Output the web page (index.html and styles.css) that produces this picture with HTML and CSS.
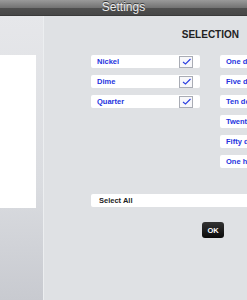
FILE: index.html
```html
<!DOCTYPE html>
<html lang="en">
<head>
    <meta charset="UTF-8">
    <meta name="viewport" content="width=device-width, initial-scale=1.0">
    <title>Settings</title>
    <link rel="stylesheet" href="styles.css">
</head>
<body>

<header class="titlebar">Settings</header>

<div class="main">
    <aside class="sidebar">
        <div class="side-card"></div>
    </aside>

    <section class="content">
        <h2 class="heading">SELECTION</h2>

        <div class="coin-grid">
            <div class="coin-col">
                <div class="coin-row">
                    <span>Nickel</span>
                    <span class="check"><svg width="11" height="9" viewBox="0 0 11 9"><path d="M2 5 L4.5 7 L9.5 2" fill="none" stroke="#2b3fe0" stroke-width="1.1"/></svg></span>
                </div>
                <div class="coin-row">
                    <span>Dime</span>
                    <span class="check"><svg width="11" height="9" viewBox="0 0 11 9"><path d="M2 5 L4.5 7 L9.5 2" fill="none" stroke="#2b3fe0" stroke-width="1.1"/></svg></span>
                </div>
                <div class="coin-row">
                    <span>Quarter</span>
                    <span class="check"><svg width="11" height="9" viewBox="0 0 11 9"><path d="M2 5 L4.5 7 L9.5 2" fill="none" stroke="#2b3fe0" stroke-width="1.1"/></svg></span>
                </div>
            </div>
            <div class="coin-col">
                <div class="coin-row"><span>One dollar</span></div>
                <div class="coin-row"><span>Five dollars</span></div>
                <div class="coin-row"><span>Ten dollars</span></div>
                <div class="coin-row"><span>Twenty dollars</span></div>
                <div class="coin-row"><span>Fifty dollars</span></div>
                <div class="coin-row"><span>One hundred</span></div>
            </div>
        </div>

        <div class="select-all">Select All</div>

        <div class="actions">
            <button class="ok-btn">OK</button>
        </div>
    </section>
</div>

</body>
</html>
```

FILE: styles.css
```css
body {
    margin: 0;
    width: 247px;
    height: 300px;
    overflow: hidden;
    font-family: 'Liberation Sans', Arial, sans-serif;
    background: #dfe1e4;
}
.titlebar {
    height: 15px;
    line-height: 15px;
    text-align: center;
    color: #eeeeee;
    font-size: 12px;
    text-shadow: 0 -1px 0 #333;
    background: linear-gradient(to bottom, #9a9a9a 0%, #747474 50%, #4f4f4f 52%, #474747 100%);
    border-bottom: 1px solid #3a3a3a;
}
.main {
    display: flex;
    height: 284px;
}
.sidebar {
    width: 43px;
    flex-shrink: 0;
    background: linear-gradient(to bottom, #e6e7ea 0%, #dadce0 60%, #c8cad0 100%);
    border-right: 1px solid #eceef0;
}
.side-card {
    width: 36px;
    height: 153px;
    margin-top: 39px;
    background: #ffffff;
}
.content {
    flex: 1;
    min-width: 0;
    padding-left: 47px;
    overflow: hidden;
}
.heading {
    margin: 12px 8px 13px 0;
    line-height: 14px;
    font-size: 10px;
    text-align: right;
    color: #222;
}
.coin-grid {
    display: flex;
    gap: 20px;
    white-space: nowrap;
}
.coin-col {
    display: flex;
    flex-direction: column;
    gap: 7px;
    width: 109px;
    flex-shrink: 0;
}
.coin-row {
    display: flex;
    align-items: center;
    justify-content: space-between;
    height: 13px;
    padding: 0 7px 0 6px;
    background: #ffffff;
    border-radius: 2px;
    font-size: 7.5px;
    font-weight: bold;
    color: #2433e0;
}
.check {
    display: flex;
    align-items: center;
    justify-content: center;
    width: 12px;
    height: 10px;
    border: 1px solid #a9acb4;
    background: #f7f7fa;
}
.select-all {
    margin-top: 26px;
    height: 13px;
    line-height: 13px;
    padding-left: 8px;
    background: #ffffff;
    border-radius: 2px 0 0 2px;
    font-size: 7.5px;
    font-weight: bold;
    color: #222;
}
.actions {
    display: flex;
    justify-content: flex-end;
    padding-right: 23px;
    margin-top: 15px;
}
.ok-btn {
    width: 22px;
    height: 16px;
    padding: 0;
    border: none;
    border-radius: 3px;
    background: linear-gradient(to bottom, #333 0%, #0a0a0a 100%);
    color: #fff;
    font-family: 'Liberation Sans', Arial, sans-serif;
    font-size: 7.5px;
    font-weight: bold;
}
```
